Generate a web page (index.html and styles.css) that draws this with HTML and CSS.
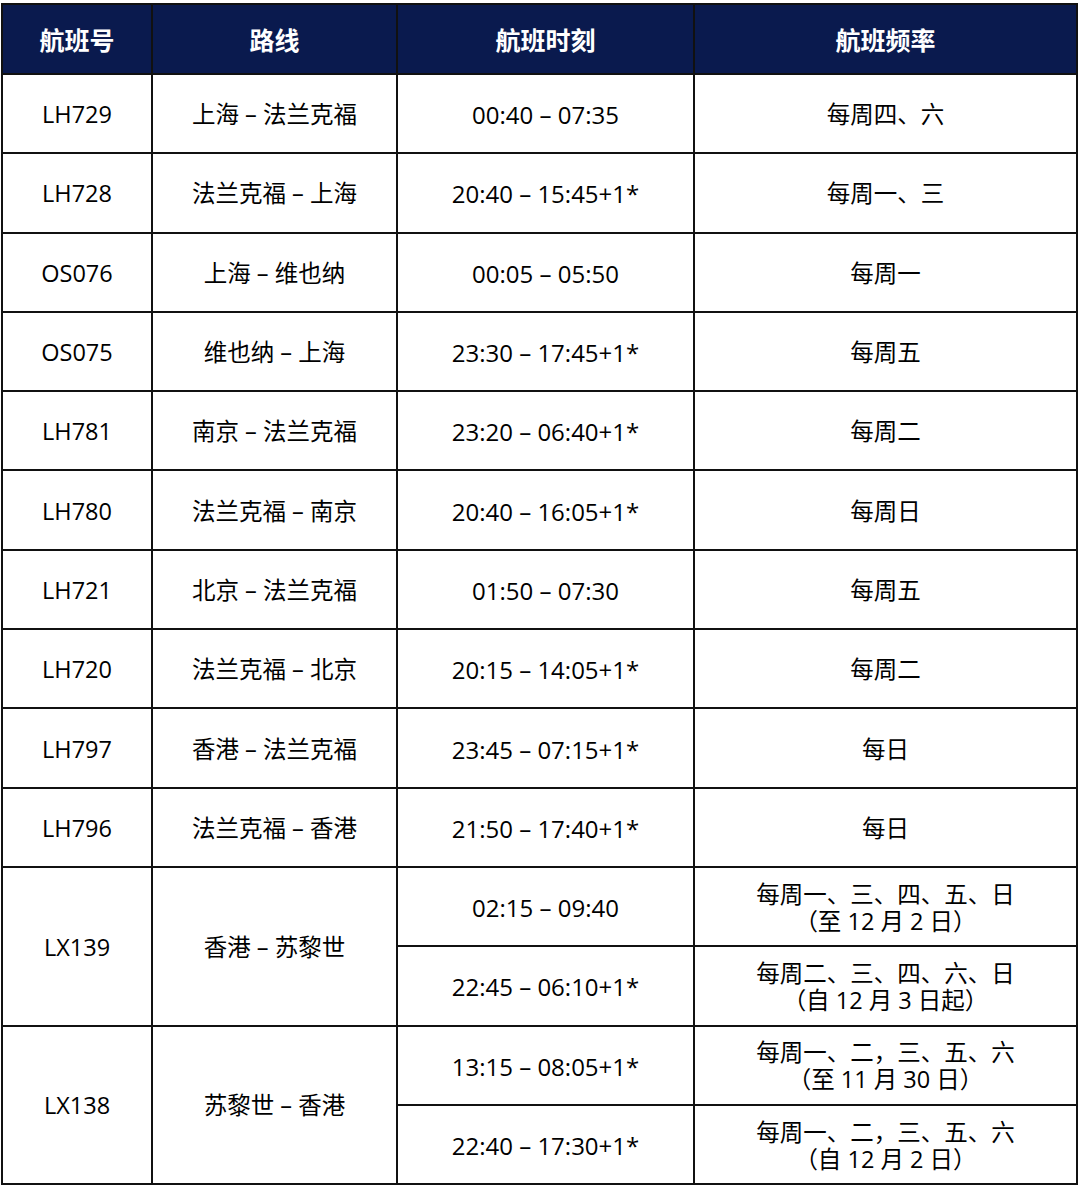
FILE: index.html
```html
<!DOCTYPE html>
<html lang="zh-CN">
<head>
<meta charset="utf-8">
<title>航班时刻表</title>
<link rel="stylesheet" href="styles.css">
</head>
<body>
<table class="schedule">
  <colgroup>
    <col class="c1"><col class="c2"><col class="c3"><col class="c4">
  </colgroup>
  <thead>
    <tr class="head">
      <th>航班号</th><th>路线</th><th>航班时刻</th><th>航班频率</th>
    </tr>
  </thead>
  <tbody>
    <tr><td class="num">LH729</td><td>上海 – 法兰克福</td><td class="time">00:40 – 07:35</td><td>每周四、六</td></tr>
    <tr><td class="num">LH728</td><td>法兰克福 – 上海</td><td class="time">20:40 – 15:45+1*</td><td>每周一、三</td></tr>
    <tr><td class="num">OS076</td><td>上海 – 维也纳</td><td class="time">00:05 – 05:50</td><td>每周一</td></tr>
    <tr><td class="num">OS075</td><td>维也纳 – 上海</td><td class="time">23:30 – 17:45+1*</td><td>每周五</td></tr>
    <tr><td class="num">LH781</td><td>南京 – 法兰克福</td><td class="time">23:20 – 06:40+1*</td><td>每周二</td></tr>
    <tr><td class="num">LH780</td><td>法兰克福 – 南京</td><td class="time">20:40 – 16:05+1*</td><td>每周日</td></tr>
    <tr><td class="num">LH721</td><td>北京 – 法兰克福</td><td class="time">01:50 – 07:30</td><td>每周五</td></tr>
    <tr><td class="num">LH720</td><td>法兰克福 – 北京</td><td class="time">20:15 – 14:05+1*</td><td>每周二</td></tr>
    <tr><td class="num">LH797</td><td>香港 – 法兰克福</td><td class="time">23:45 – 07:15+1*</td><td>每日</td></tr>
    <tr><td class="num">LH796</td><td>法兰克福 – 香港</td><td class="time">21:50 – 17:40+1*</td><td>每日</td></tr>
    <tr><td class="num" rowspan="2">LX139</td><td rowspan="2">香港 – 苏黎世</td><td class="time">02:15 – 09:40</td><td class="two"><span class="ln">每周一、三、四、五、日</span><span class="ln">（至 12 月 2 日）</span></td></tr>
    <tr><td class="time">22:45 – 06:10+1*</td><td class="two"><span class="ln">每周二、三、四、六、日</span><span class="ln">（自 12 月 3 日起）</span></td></tr>
    <tr><td class="num" rowspan="2">LX138</td><td rowspan="2">苏黎世 – 香港</td><td class="time">13:15 – 08:05+1*</td><td class="two"><span class="ln">每周一、二，三、五、六</span><span class="ln">（至 11 月 30 日）</span></td></tr>
    <tr><td class="time">22:40 – 17:30+1*</td><td class="two"><span class="ln">每周一、二，三、五、六</span><span class="ln">（自 12 月 2 日）</span></td></tr>
  </tbody>
</table>
</body>
</html>
```

FILE: styles.css
```css
html, body {
  margin: 0;
  padding: 0;
  background: #ffffff;
}

body {
  padding: 3px 0 0 1px;
  font-family: "Open Sans", "Noto Sans CJK SC", sans-serif;
  color: #000000;
}

.schedule {
  border-collapse: collapse;
  table-layout: fixed;
  width: 1077px;
}

.c1 { width: 150px; }
.c2 { width: 245px; }
.c3 { width: 297px; }
.c4 { width: 383px; }

.schedule th,
.schedule td {
  border: 2px solid #111111;
  padding: 0;
  text-align: center;
  vertical-align: middle;
}

.head {
  height: 70px;
  background: #0a1a4e;
}

.head th {
  color: #ffffff;
  font-family: "Noto Sans CJK SC", sans-serif;
  font-size: 25px;
  font-weight: 700;
}

.schedule tbody tr {
  height: 79.3px;
}

.schedule td {
  font-size: 23.5px;
  line-height: 27px;
  padding-top: 2px;
}

.schedule td.time {
  font-size: 24px;
}

.two .ln {
  display: block;
  height: 27px;
  line-height: 27px;
  font-size: 23.5px;
}
```
